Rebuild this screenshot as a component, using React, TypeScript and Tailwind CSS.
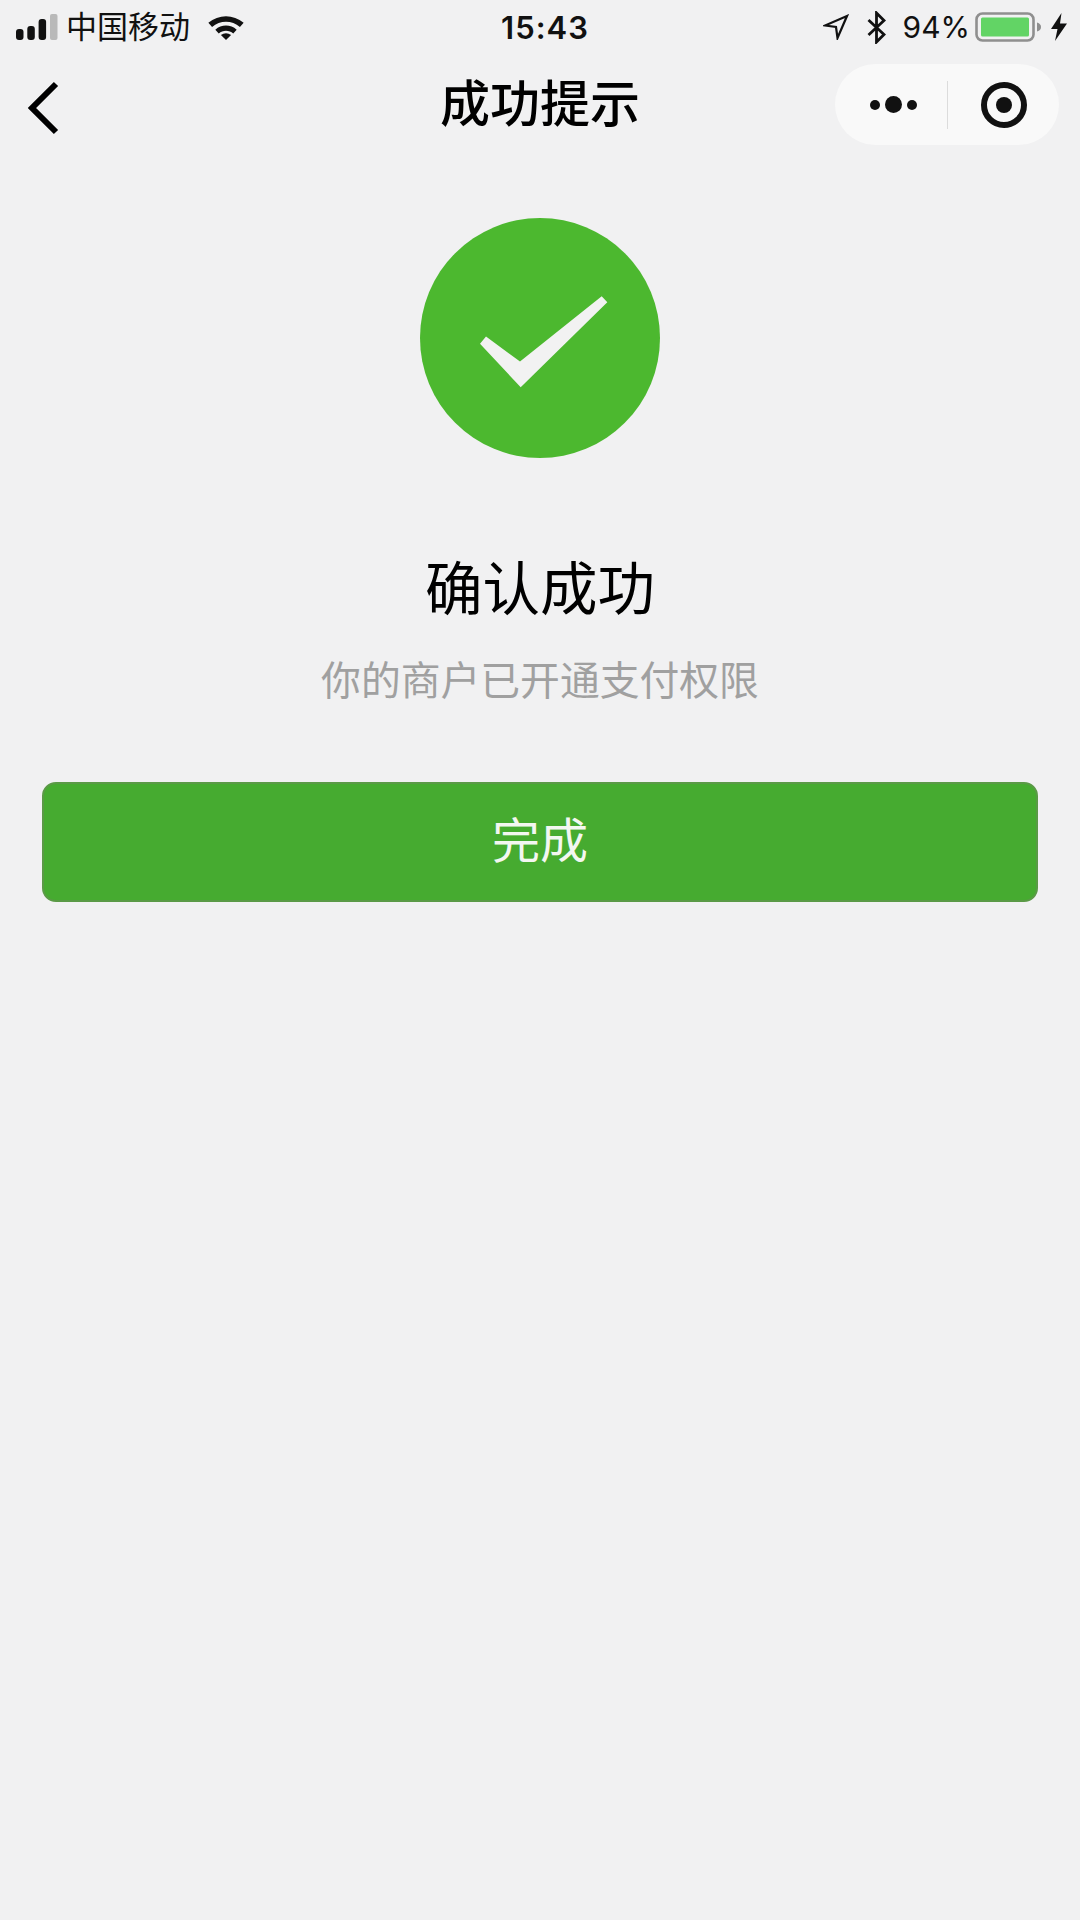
import React from "react";

const cjk = "font-['Liberation_Sans','Noto_Sans_CJK_SC',sans-serif]";

function Signal() {
  return (
    <svg width="42" height="26" viewBox="0 0 42 26" className="block">
      <rect x="0" y="15" width="7.500" height="11" rx="3" fill="#111" />
      <rect x="11.300" y="12" width="7.500" height="14" rx="3" fill="#111" />
      <rect x="22.600" y="5" width="7.500" height="21" rx="3" fill="#111" />
      <rect x="34" y="0" width="7.500" height="26" rx="2" fill="#b9b9b9" />
    </svg>
  );
}

function Wifi() {
  return (
    <svg width="36" height="26" viewBox="0 0 38 28" className="block">
      <path d="M0 9.500C11 0 27 0 38 9.500L34 14C25.500 6.500 12.500 6.500 4 14Z" fill="#111" />
      <path d="M7.500 17C14 11 24 11 30.500 17L26.800 21C22.500 17.200 15.500 17.200 11.200 21Z" fill="#111" />
      <path d="M13.500 22.500C17 20.300 21 20.300 24.500 22.500L19 28Z" fill="#111" />
    </svg>
  );
}

function Location() {
  return (
    <svg width="26" height="26" viewBox="0 0 26 26" className="block">
      <path d="M24 2L2 11.500L13 13L14.500 24Z" fill="none" stroke="#111" strokeWidth="2.200" />
    </svg>
  );
}

function Bluetooth() {
  return (
    <svg width="19" height="33" viewBox="0 0 19 33" className="block">
      <path d="M1.500 9L17 23.500L9.500 31V2L17 9.500L1.500 24" fill="none" stroke="#111" strokeWidth="2.800" />
    </svg>
  );
}

function Battery() {
  return (
    <svg width="66" height="30" viewBox="0 0 66 30" className="block">
      <rect x="1.500" y="1.500" width="57" height="27" rx="6" fill="none" stroke="#8f8f8f" strokeWidth="2.600" />
      <rect x="6" y="5.500" width="48" height="19" rx="1.500" fill="#62d465" />
      <path d="M62 10.500C65 11.500 66 13 66 15S65 18.500 62 19.500Z" fill="#8f8f8f" />
    </svg>
  );
}

function Bolt() {
  return (
    <svg width="16" height="28" viewBox="0 0 16 28" className="block">
      <path d="M10.500 0L0 16H6.500L4 28L16 10.500H9Z" fill="#111" />
    </svg>
  );
}

function Check() {
  return (
    <svg width="240" height="240" viewBox="0 0 240 240" className="block">
      <path d="M60 125.800L66 118.500L100 143.500L181.700 78.200L187.300 84.200L100.700 169.200Z" fill="#f2f2f2" />
    </svg>
  );
}

export default function App() {
  return (
    <div className={`${cjk} flex h-[1920px] w-[1080px] flex-col items-center bg-[#f1f1f2] text-black`}>
      <div className="grid h-[54px] w-full grid-cols-3 items-center pl-4 pr-[13px] text-[#111]">
        <div className="flex items-center">
          <Signal />
          <span className="ml-[8px] text-[31px] leading-none">中国移动</span>
          <span className="ml-[18px]"><Wifi /></span>
        </div>
        <div className="pl-[7px] text-center font-['Inter',sans-serif] text-[31px] font-semibold leading-none tracking-[1px]">15:43</div>
        <div className="flex items-center justify-end">
          <Location />
          <span className="ml-[18px]"><Bluetooth /></span>
          <span className="ml-[17px] font-['Inter',sans-serif] text-[30px] leading-none">94%</span>
          <span className="ml-[5px]"><Battery /></span>
          <span className="ml-[10px]"><Bolt /></span>
        </div>
      </div>

      <div className="relative flex h-[82px] w-full items-start justify-center">
        <svg width="34" height="54" viewBox="0 0 34 54" className="absolute left-[27px] top-[27px]">
          <path d="M29 3L5 27L29 51" fill="none" stroke="#000" strokeWidth="6" />
        </svg>
        <h1 className="mt-[26px] text-[50px] font-medium leading-none">成功提示</h1>
        <div className="absolute left-[835px] top-[10px] flex h-[81px] w-[224px] items-center rounded-full bg-[#f9f9f9]">
          <div className="flex w-[112px] shrink-0 items-center justify-center gap-[5px] pl-[5px]">
            <span className="h-[10px] w-[10px] rounded-full bg-[#111]" />
            <span className="h-[17px] w-[17px] rounded-full bg-[#111]" />
            <span className="h-[10px] w-[10px] rounded-full bg-[#111]" />
          </div>
          <div className="h-[48px] w-px bg-[#dcdcdc]" />
          <div className="flex flex-1 items-center justify-center">
            <div className="flex h-[46px] w-[46px] items-center justify-center rounded-full border-[6px] border-[#111]">
              <span className="h-[16px] w-[16px] rounded-full bg-[#111]" />
            </div>
          </div>
        </div>
      </div>

      <div className="mt-[82px] h-[240px] w-[240px] rounded-full bg-[#4cb82f]">
        <Check />
      </div>

      <div className="mt-[99px] text-[57.500px] leading-[66px]">确认成功</div>
      <div className="mt-[35px] text-[39.800px] leading-[46px] text-[#a0a0a0]">你的商户已开通支付权限</div>

      <div className="mt-[78px] flex h-[120px] w-[996px] items-center justify-center rounded-[14px] border-2 border-[#5a9a46] bg-[#46ab30] text-[48px] text-[#f3f7f1]">
        完成
      </div>
    </div>
  );
}
